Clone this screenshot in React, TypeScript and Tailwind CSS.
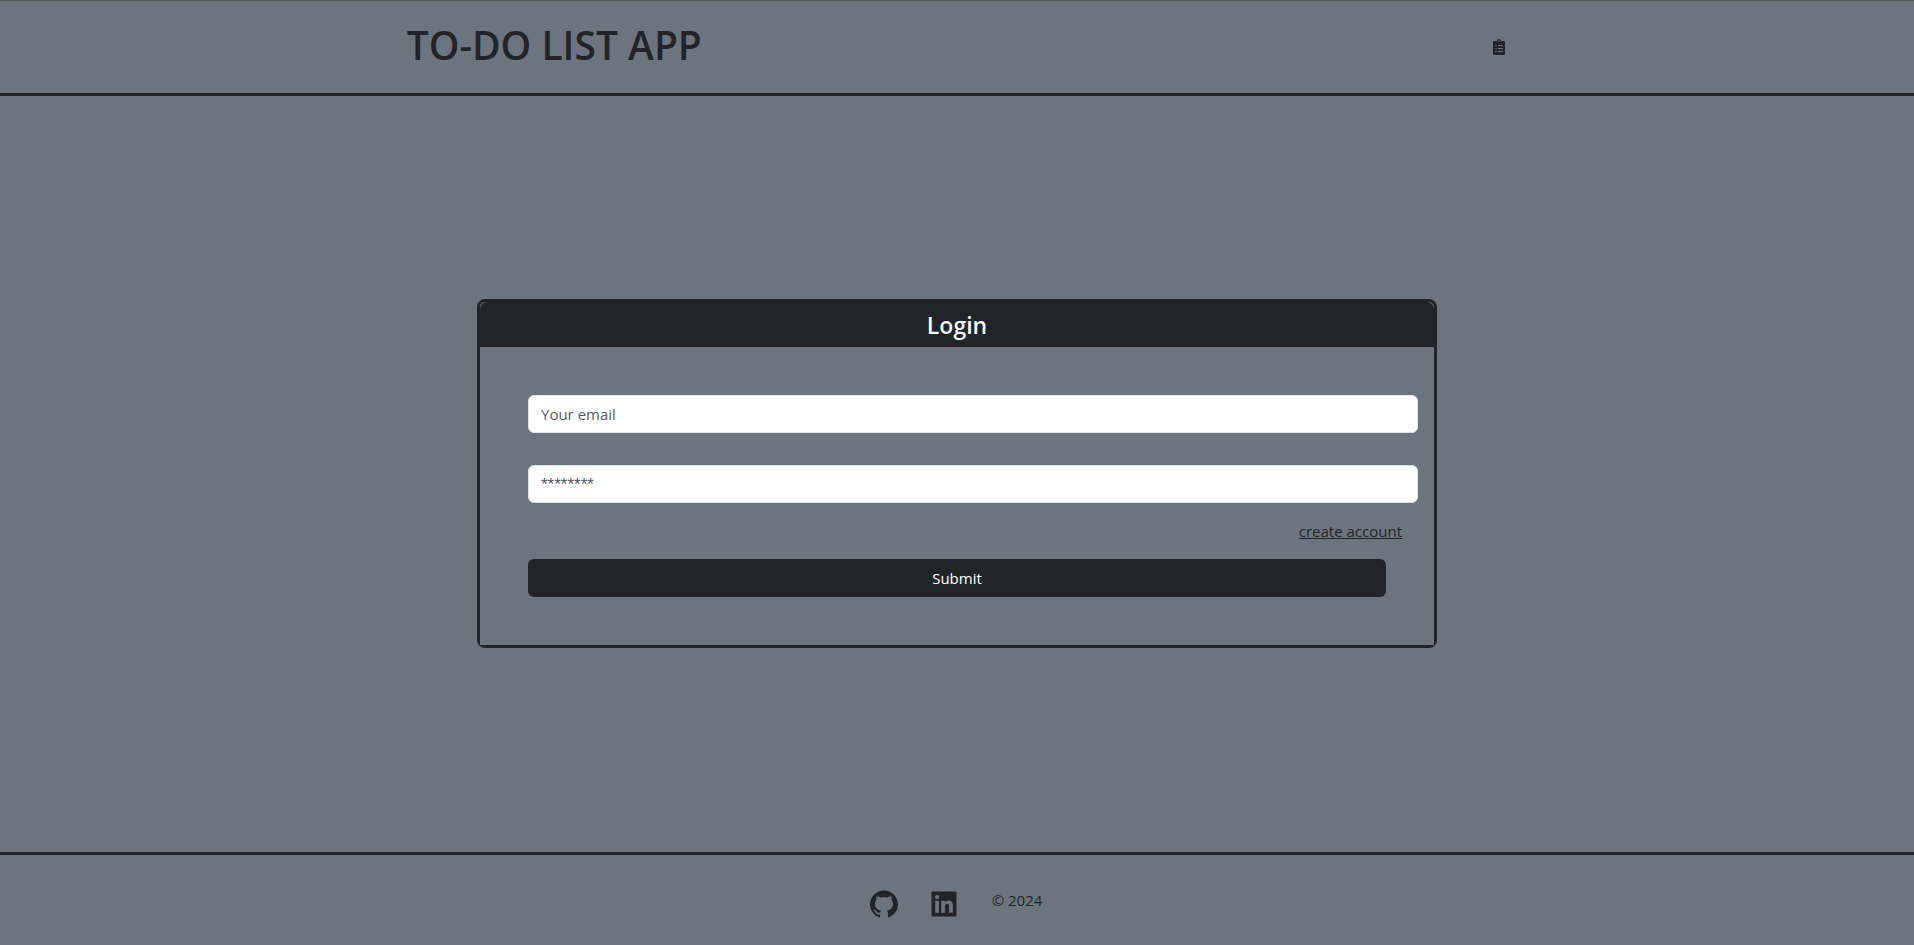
import { AiFillGithub, AiFillLinkedin } from "react-icons/ai";
import { FaClipboardList } from "react-icons/fa";

const inputClass =
  "block h-[38px] w-full rounded-md border border-[#dee2e6] bg-white px-3 text-[15px] leading-6 text-[#212529] placeholder:text-[#595c5f] placeholder:opacity-100";

function Header() {
  return (
    <header className="border-t border-b-3 border-t-[#575757] border-b-[#212529]">
      <div className="flex h-23 items-center justify-around px-3">
        <h1 className="pb-1 text-[39px] leading-12 font-semibold">TO-DO LIST APP</h1>
        <FaClipboardList className="size-4" aria-hidden="true" />
      </div>
    </header>
  );
}

function LoginCard() {
  return (
    <section className="w-full max-w-[960px] rounded-lg border-3 border-[#212529]">
      <h2 className="h-[45px] rounded-t-[7px] bg-[#212529] pt-[7px] text-center text-[23px] leading-8 font-semibold text-[#f8f9fa]">
        Login
      </h2>
      <form className="bg-[#6c757d] py-12 pr-4 pl-12" onSubmit={(event) => event.preventDefault()}>
        <input className={inputClass} type="email" placeholder="Your email" aria-label="Email" />
        <input
          className={`${inputClass} mt-8 placeholder:font-['Liberation_Sans'] placeholder:text-[17px]`}
          type="password"
          placeholder="********"
          aria-label="Password"
        />
        <div className="my-4 flex justify-end pr-4">
          <a href="#create-account" className="text-[15px] leading-6 underline">
            create account
          </a>
        </div>
        <div className="pr-8">
          <button type="submit" className="h-[38px] w-full rounded-md bg-[#212529] text-[15px] leading-6 text-white">
            Submit
          </button>
        </div>
      </form>
    </section>
  );
}

function Footer() {
  return (
    <footer className="flex h-[93px] items-start justify-center gap-7 border-t-3 border-[#212529] pt-[33px] pr-1">
      <a href="#github" aria-label="GitHub">
        <AiFillGithub className="size-8" />
      </a>
      <a href="#linkedin" aria-label="LinkedIn">
        <AiFillLinkedin className="size-8" />
      </a>
      <p className="pl-1 text-[15px] leading-6">© 2024</p>
    </footer>
  );
}

export default function App() {
  return (
    <div className="flex min-h-screen flex-col bg-[#6c757d] font-['Open_Sans','Noto_Sans',sans-serif] text-[#212529]">
      <Header />
      <main className="flex grow items-center justify-center pb-0.5">
        <LoginCard />
      </main>
      <Footer />
    </div>
  );
}
